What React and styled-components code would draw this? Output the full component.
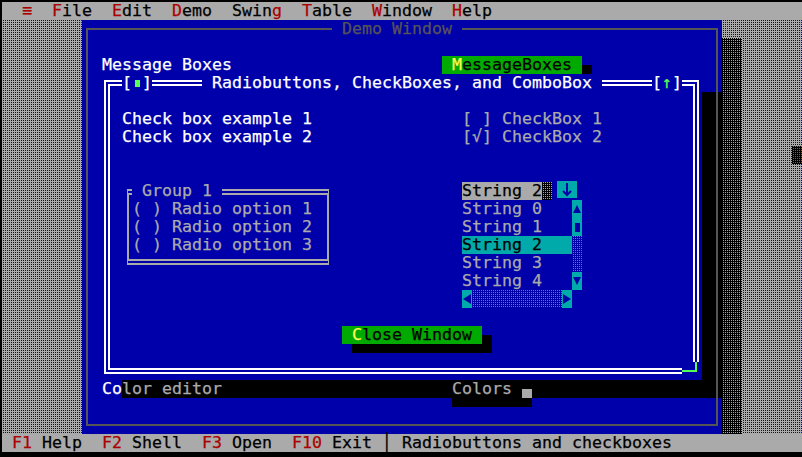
import React from "react";
import styled, { createGlobalStyle, css } from "styled-components";

// CGA palette
const C = {
  black: "#000000",
  blue: "#0000aa",
  green: "#00aa00",
  cyan: "#00aaaa",
  red: "#aa0000",
  brown: "#aa5500",
  grey: "#aaaaaa",
  dark: "#555555",
  lime: "#55ff55",
  yellow: "#ffff55",
  white: "#ffffff",
};

// 2x2 dither: one pixel of `dot` over `base`
const dots = (dot, base) =>
  `conic-gradient(${dot} 0 25%, ${base} 0 100%) 0 0 / 2px 2px`;

// place an item on the character grid (0-based col/row)
const at = css`
  grid-column: ${(p) => p.$col + 1} / span ${(p) => p.$w ?? 1};
  grid-row: ${(p) => p.$row + 1} / span ${(p) => p.$h ?? 1};
`;

const GlobalStyle = createGlobalStyle`
  html, body {
    margin: 0;
    background: #000;
    overflow: hidden;
  }
`;

const Screen = styled.div`
  width: 802px;
  height: 457px;
  box-sizing: border-box;
  padding: 2px 0 0 2px;
  background: ${C.black};
  display: grid;
  grid-template-columns: repeat(80, 10px);
  grid-template-rows: repeat(25, 18px);
  font-family: "DejaVu Sans Mono", "Liberation Mono", monospace;
  font-size: 16.61px;
  line-height: 18px;
  white-space: pre;
  overflow: hidden;
  -webkit-text-stroke: 0.25px currentColor;
`;

const MenuBar = styled.div`
  grid-column: 1 / -1;
  grid-row: 1;
  background: ${C.grey};
  color: ${C.black};
`;

const StatusBar = styled.div`
  grid-column: 1 / -1;
  grid-row: 25;
  background: ${C.grey};
  color: ${C.black};
`;

const Hot = styled.span`
  color: ${C.red};
`;

const Desktop = styled.div`
  grid-column: 1 / -1;
  grid-row: 2 / 25;
  background: ${dots(C.blue, C.grey)};
`;

const Speck = styled.div`
  ${at};
  background: ${dots(C.brown, C.black)};
`;

const WindowShadow = styled.div`
  ${at};
  background: ${dots(C.grey, C.black)};
`;

const Window = styled.section`
  ${at};
  display: grid;
  grid-template-columns: repeat(64, 10px);
  grid-template-rows: repeat(23, 18px);
  background: ${C.blue};
`;

const WindowFrame = styled.div`
  grid-column: 1 / -1;
  grid-row: 1 / -1;
  margin: 8px 4px;
  border: 2px solid ${C.dark};
`;

const WindowTitle = styled.div`
  ${at};
  background: ${C.blue};
  color: ${C.dark};
`;

const Label = styled.div`
  ${at};
  color: ${(p) => p.$color};
`;

const Dimmed = styled.span`
  color: ${C.grey};
`;

const ButtonFace = styled.div`
  ${at};
  background: ${(p) => (p.$shaded ? C.black : C.green)};
  color: ${(p) => (p.$shaded ? C.grey : C.black)};
`;

const HotKey = styled.span`
  color: ${(p) => (p.$shaded ? C.grey : C.yellow)};
`;

const HalfShade = styled.div`
  ${at};
  background: linear-gradient(
    ${(p) => (p.$half === "upper" ? "to top" : "to bottom")},
    transparent 9px,
    ${(p) => p.$tone} 9px
  );
`;

const DropShadow = styled.div`
  ${at};
  background: ${C.black};
`;

const Dialog = styled.section`
  ${at};
  display: grid;
  grid-template-columns: repeat(60, 10px);
  grid-template-rows: repeat(17, 18px);
  background: ${C.blue};
`;

const DialogFrame = styled.div`
  grid-column: 1 / -1;
  grid-row: 1 / -1;
  margin: 6px 3px 6px 2px;
  border: 6px double ${C.white};
`;

const TitleChunk = styled.div`
  ${at};
  background: ${C.blue};
  color: ${(p) => p.$color || C.white};
`;

const Lime = styled.span`
  color: ${C.lime};
`;

const CloseDot = styled.span`
  display: inline-block;
  width: 5px;
  height: 7px;
  margin: 0 2px 0 3px;
  vertical-align: 1px;
  background: ${C.lime};
`;

const ResizeCorner = styled.div`
  ${at};
  background: ${C.blue};
`;

const CornerMark = styled.div`
  width: 15px;
  height: 10px;
  box-sizing: border-box;
  border-right: 2px solid ${C.lime};
  border-bottom: 2px solid ${C.lime};
`;

const GroupFrame = styled.div`
  ${at};
  margin: 7px 3px 7px 5px;
  border-left: 2px solid ${C.grey};
  border-right: 2px solid ${C.grey};
  border-top: 6px double ${C.grey};
  border-bottom: 6px double ${C.grey};
`;

const ComboInput = styled.div`
  ${at};
  background: ${C.grey};
  color: ${C.black};
`;

const ComboPad = styled.div`
  ${at};
  background: ${dots(C.grey, C.black)};
`;

const ComboButton = styled.div`
  ${at};
  display: flex;
  padding: 0 5px 2px;
  margin-top: -1px;
`;

const ComboButtonFace = styled.div`
  flex: 1;
  background: ${C.cyan};
  display: flex;
  align-items: center;
  justify-content: center;
`;

const ListItem = styled.div`
  ${at};
  background: ${(p) => (p.$selected ? C.cyan : "transparent")};
  color: ${(p) => (p.$selected ? C.black : C.grey)};
`;

const ScrollBar = styled.div`
  ${at};
  display: flex;
  flex-direction: ${(p) => (p.$vertical ? "column" : "row")};
`;

const ScrollButton = styled.div`
  flex: 0 0 ${(p) => (p.$vertical ? "18px" : "10px")};
  background: ${C.cyan};
  display: flex;
  align-items: center;
  justify-content: center;
`;

const ScrollThumb = styled.div`
  flex: 0 0 18px;
  background: ${C.cyan};
  display: flex;
  justify-content: center;
  align-items: center;
  &::after {
    content: "";
    width: 5px;
    height: 9px;
    background: ${C.blue};
  }
`;

const ScrollTrack = styled.div`
  flex: 1;
  background: ${dots(C.cyan, C.blue)};
`;

const arrowPoints = {
  up: "4,1 8,9 0,9",
  down: "0,1 8,1 4,9",
  left: "0,5 8,0 8,10",
  right: "0,0 8,5 0,10",
};

const Arrow = ({ dir }) => (
  <svg width="8" height="10" viewBox="0 0 8 10">
    <polygon points={arrowPoints[dir]} fill={C.blue} />
  </svg>
);

const DownArrow = () => (
  <svg width="10" height="14" viewBox="0 0 10 14">
    <path d="M5 0V12M1 8L5 12L9 8" stroke={C.blue} strokeWidth="2" fill="none" />
  </svg>
);

const Button = ({ col, row, hot, rest, shaded }) => {
  const w = hot.length + rest.length + 2;
  return (
    <>
      <ButtonFace $col={col} $row={row} $w={w} $shaded={shaded}>
        {" "}
        <HotKey $shaded={shaded}>{hot}</HotKey>
        {rest + " "}
      </ButtonFace>
      <HalfShade
        $col={col + w}
        $row={row}
        $half="lower"
        $tone={shaded ? C.grey : C.black}
      />
      <HalfShade $col={col + 1} $row={row + 1} $w={w} $half="upper" $tone={C.black} />
    </>
  );
};

const menu = [
  ["", "≡", ""],
  ["", "F", "ile"],
  ["", "E", "dit"],
  ["", "D", "emo"],
  ["Swin", "g", ""],
  ["", "T", "able"],
  ["", "W", "indow"],
  ["", "H", "elp"],
];

const keys = [
  ["F1", "Help"],
  ["F2", "Shell"],
  ["F3", "Open"],
  ["F10", "Exit"],
];

const strings = ["String 0", "String 1", "String 2", "String 3", "String 4"];

const App = () => {
  return (
    <Screen>
      <GlobalStyle />
      <MenuBar>
        {menu.map(([a, h, b]) => (
          <React.Fragment key={a + h + b}>
            {"  " + a}
            <Hot>{h}</Hot>
            {b}
          </React.Fragment>
        ))}
      </MenuBar>

      <Desktop />
      <Speck $col={79} $row={8} />
      <WindowShadow $col={72} $row={2} $w={2} $h={22} />

      <Window $col={8} $row={1} $w={64} $h={23}>
        <DropShadow $col={62} $row={4} $w={2} $h={16} />
        <DropShadow $col={4} $row={20} $w={60} />
        <WindowFrame />
        <WindowTitle $col={25} $row={0} $w={13}>
          {" Demo Window "}
        </WindowTitle>

        <Label $col={2} $row={2} $w={13} $color={C.white}>
          Message Boxes
        </Label>
        <Button col={36} row={2} hot="M" rest="essageBoxes" />

        <Label $col={2} $row={20} $w={12} $color={C.white}>
          Co<Dimmed>lor editor</Dimmed>
        </Label>
        <Button col={36} row={20} hot="C" rest="olors" shaded />

        <Dialog $col={2} $row={3} $w={60} $h={17}>
          <DialogFrame />
          <TitleChunk $col={2} $row={0} $w={3}>
            [<CloseDot />]
          </TitleChunk>
          <TitleChunk $col={10} $row={0} $w={40}>
            {" Radiobuttons, CheckBoxes, and ComboBox "}
          </TitleChunk>
          <TitleChunk $col={55} $row={0} $w={3}>
            [<Lime>↑</Lime>]
          </TitleChunk>
          <ResizeCorner $col={58} $row={16} $w={2}>
            <CornerMark />
          </ResizeCorner>

          <Label $col={2} $row={2} $w={19} $color={C.white}>
            Check box example 1
          </Label>
          <Label $col={2} $row={3} $w={19} $color={C.white}>
            Check box example 2
          </Label>
          <Label $col={36} $row={2} $w={14} $color={C.grey}>
            [ ] CheckBox 1
          </Label>
          <Label $col={36} $row={3} $w={14} $color={C.grey}>
            [√] CheckBox 2
          </Label>

          <GroupFrame $col={2} $row={6} $w={21} $h={5} />
          <TitleChunk $col={3} $row={6} $w={9} $color={C.grey}>
            {" Group 1 "}
          </TitleChunk>
          {[1, 2, 3].map((n) => (
            <Label key={n} $col={3} $row={6 + n} $w={18} $color={C.grey}>
              {"( ) Radio option " + n}
            </Label>
          ))}

          <ComboInput $col={36} $row={6} $w={8}>
            String 2
          </ComboInput>
          <ComboPad $col={44} $row={6} />
          <ComboButton $col={45} $row={6} $w={3}>
            <ComboButtonFace>
              <DownArrow />
            </ComboButtonFace>
          </ComboButton>

          {strings.map((s, i) => (
            <ListItem key={s} $col={36} $row={7 + i} $w={11} $selected={i === 2}>
              {s}
            </ListItem>
          ))}
          <ScrollBar $col={47} $row={7} $h={5} $vertical>
            <ScrollButton $vertical>
              <Arrow dir="up" />
            </ScrollButton>
            <ScrollThumb />
            <ScrollTrack />
            <ScrollButton $vertical>
              <Arrow dir="down" />
            </ScrollButton>
          </ScrollBar>
          <ScrollBar $col={36} $row={12} $w={11}>
            <ScrollButton>
              <Arrow dir="left" />
            </ScrollButton>
            <ScrollTrack />
            <ScrollButton>
              <Arrow dir="right" />
            </ScrollButton>
          </ScrollBar>

          <Button col={24} row={14} hot="C" rest="lose Window" />
        </Dialog>
      </Window>

      <StatusBar>
        {keys.map(([k, t], i) => (
          <React.Fragment key={k}>
            {i ? "  " : " "}
            <Hot>{k}</Hot>
            {" " + t}
          </React.Fragment>
        ))}
        {" │ Radiobuttons and checkboxes"}
      </StatusBar>
    </Screen>
  );
};

export default App;
